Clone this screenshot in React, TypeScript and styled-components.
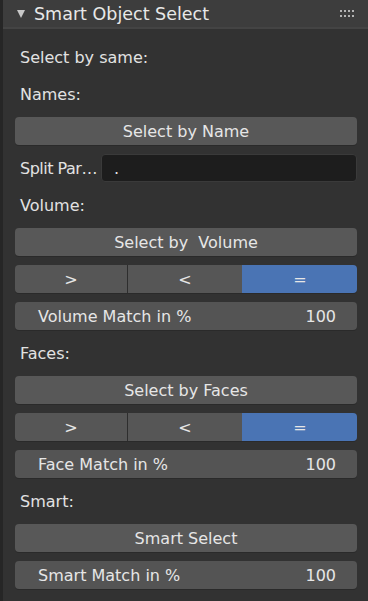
import * as React from "react"
import styled, { createGlobalStyle } from "styled-components"

const GlobalStyle = createGlobalStyle`
  html, body {
    margin: 0;
    padding: 0;
    background: #303030;
  }
  body {
    font-family: "DejaVu Sans", "Liberation Sans", sans-serif;
  }
`

type ToggleProps = { active?: boolean }

const Panel = styled.div`
  width: 368px;
  height: 601px;
  background: #323232;
  border-left: 3px solid #262626;
  box-sizing: border-box;
  overflow: hidden;
`

const Header = styled.div`
  height: 27px;
  display: flex;
  align-items: center;
  background: #3d3d3d;
  border-bottom: 2px solid #444444;
  padding: 0 12px 0 14px;
  color: #e8e8e8;
  font-size: 17.5px;
`

const Arrow = styled.span`
  width: 0;
  height: 0;
  border-left: 4.5px solid transparent;
  border-right: 4.5px solid transparent;
  border-top: 8px solid #c8c8c8;
  margin-right: 9px;
  margin-top: 1px;
`

const Title = styled.span`
  flex: 1;
`

const Grip = styled.svg`
  display: block;
`

const Body = styled.div`
  display: flex;
  flex-direction: column;
  gap: 9px;
  padding: 14px 11px 0 12px;
`

const Label = styled.div`
  height: 28px;
  display: flex;
  align-items: center;
  padding-left: 5px;
  color: #e2e2e2;
  font-size: 16px;
`

const Button = styled.div`
  height: 28px;
  display: flex;
  align-items: center;
  justify-content: center;
  background: #585858;
  border-radius: 4px;
  box-shadow: 0 1px 0 #2a2a2a;
  color: #e6e6e6;
  font-size: 16px;
  white-space: pre;
`

const FieldRow = styled.div`
  height: 28px;
  display: flex;
  align-items: center;
`

const FieldLabel = styled.div`
  width: 86px;
  box-sizing: border-box;
  padding-left: 5px;
  color: #e2e2e2;
  font-size: 16px;
  letter-spacing: -0.5px;
  white-space: nowrap;
`

const TextField = styled.div`
  flex: 1;
  height: 100%;
  box-sizing: border-box;
  display: flex;
  align-items: center;
  padding-left: 12px;
  background: #1d1d1d;
  border: 1px solid #3a3a3a;
  border-radius: 4px;
  color: #e6e6e6;
  font-size: 16px;
`

const ToggleRow = styled.div`
  height: 28px;
  display: grid;
  grid-template-columns: 112px 115px 1fr;
  border-radius: 4px;
  overflow: hidden;
  box-shadow: 0 1px 0 #2a2a2a;
`

const Toggle = styled.div<ToggleProps>`
  display: flex;
  align-items: center;
  justify-content: center;
  background: ${({ active }) => (active ? "#4a74b4" : "#565656")};
  border-left: 1px solid ${({ active }) => (active ? "#4a74b4" : "#2e2e2e")};
  color: #e6e6e6;
  font-size: 16px;
  &:first-child {
    border-left: none;
  }
`

const Slider = styled.div`
  height: 28px;
  display: flex;
  align-items: center;
  justify-content: space-between;
  padding: 0 21px 0 23px;
  background: #545454;
  border-radius: 4px;
  box-shadow: 0 1px 0 #2a2a2a;
  color: #e6e6e6;
  font-size: 16px;
`

const GripIcon = () => (
  <Grip width="16" height="8" viewBox="0 0 16 8">
    {[0, 4, 8, 12].map(x =>
      [0, 5].map(y => (
        <rect key={`${x}-${y}`} x={x} y={y} width="2" height="2" fill="#b4b4b4" />
      ))
    )}
  </Grip>
)

const Comparison = () => (
  <ToggleRow>
    <Toggle>&gt;</Toggle>
    <Toggle>&lt;</Toggle>
    <Toggle active>=</Toggle>
  </ToggleRow>
)

const App = () => {
  return (
    <>
      <GlobalStyle />
      <Panel>
        <Header>
          <Arrow />
          <Title>Smart Object Select</Title>
          <GripIcon />
        </Header>
        <Body>
          <Label>Select by same:</Label>
          <Label>Names:</Label>
          <Button>Select by Name</Button>
          <FieldRow>
            <FieldLabel>Split Par…</FieldLabel>
            <TextField>.</TextField>
          </FieldRow>
          <Label>Volume:</Label>
          <Button>Select by  Volume</Button>
          <Comparison />
          <Slider>
            <span>Volume Match in %</span>
            <span>100</span>
          </Slider>
          <Label>Faces:</Label>
          <Button>Select by Faces</Button>
          <Comparison />
          <Slider>
            <span>Face Match in %</span>
            <span>100</span>
          </Slider>
          <Label>Smart:</Label>
          <Button>Smart Select</Button>
          <Slider>
            <span>Smart Match in %</span>
            <span>100</span>
          </Slider>
        </Body>
      </Panel>
    </>
  )
}

export default App
